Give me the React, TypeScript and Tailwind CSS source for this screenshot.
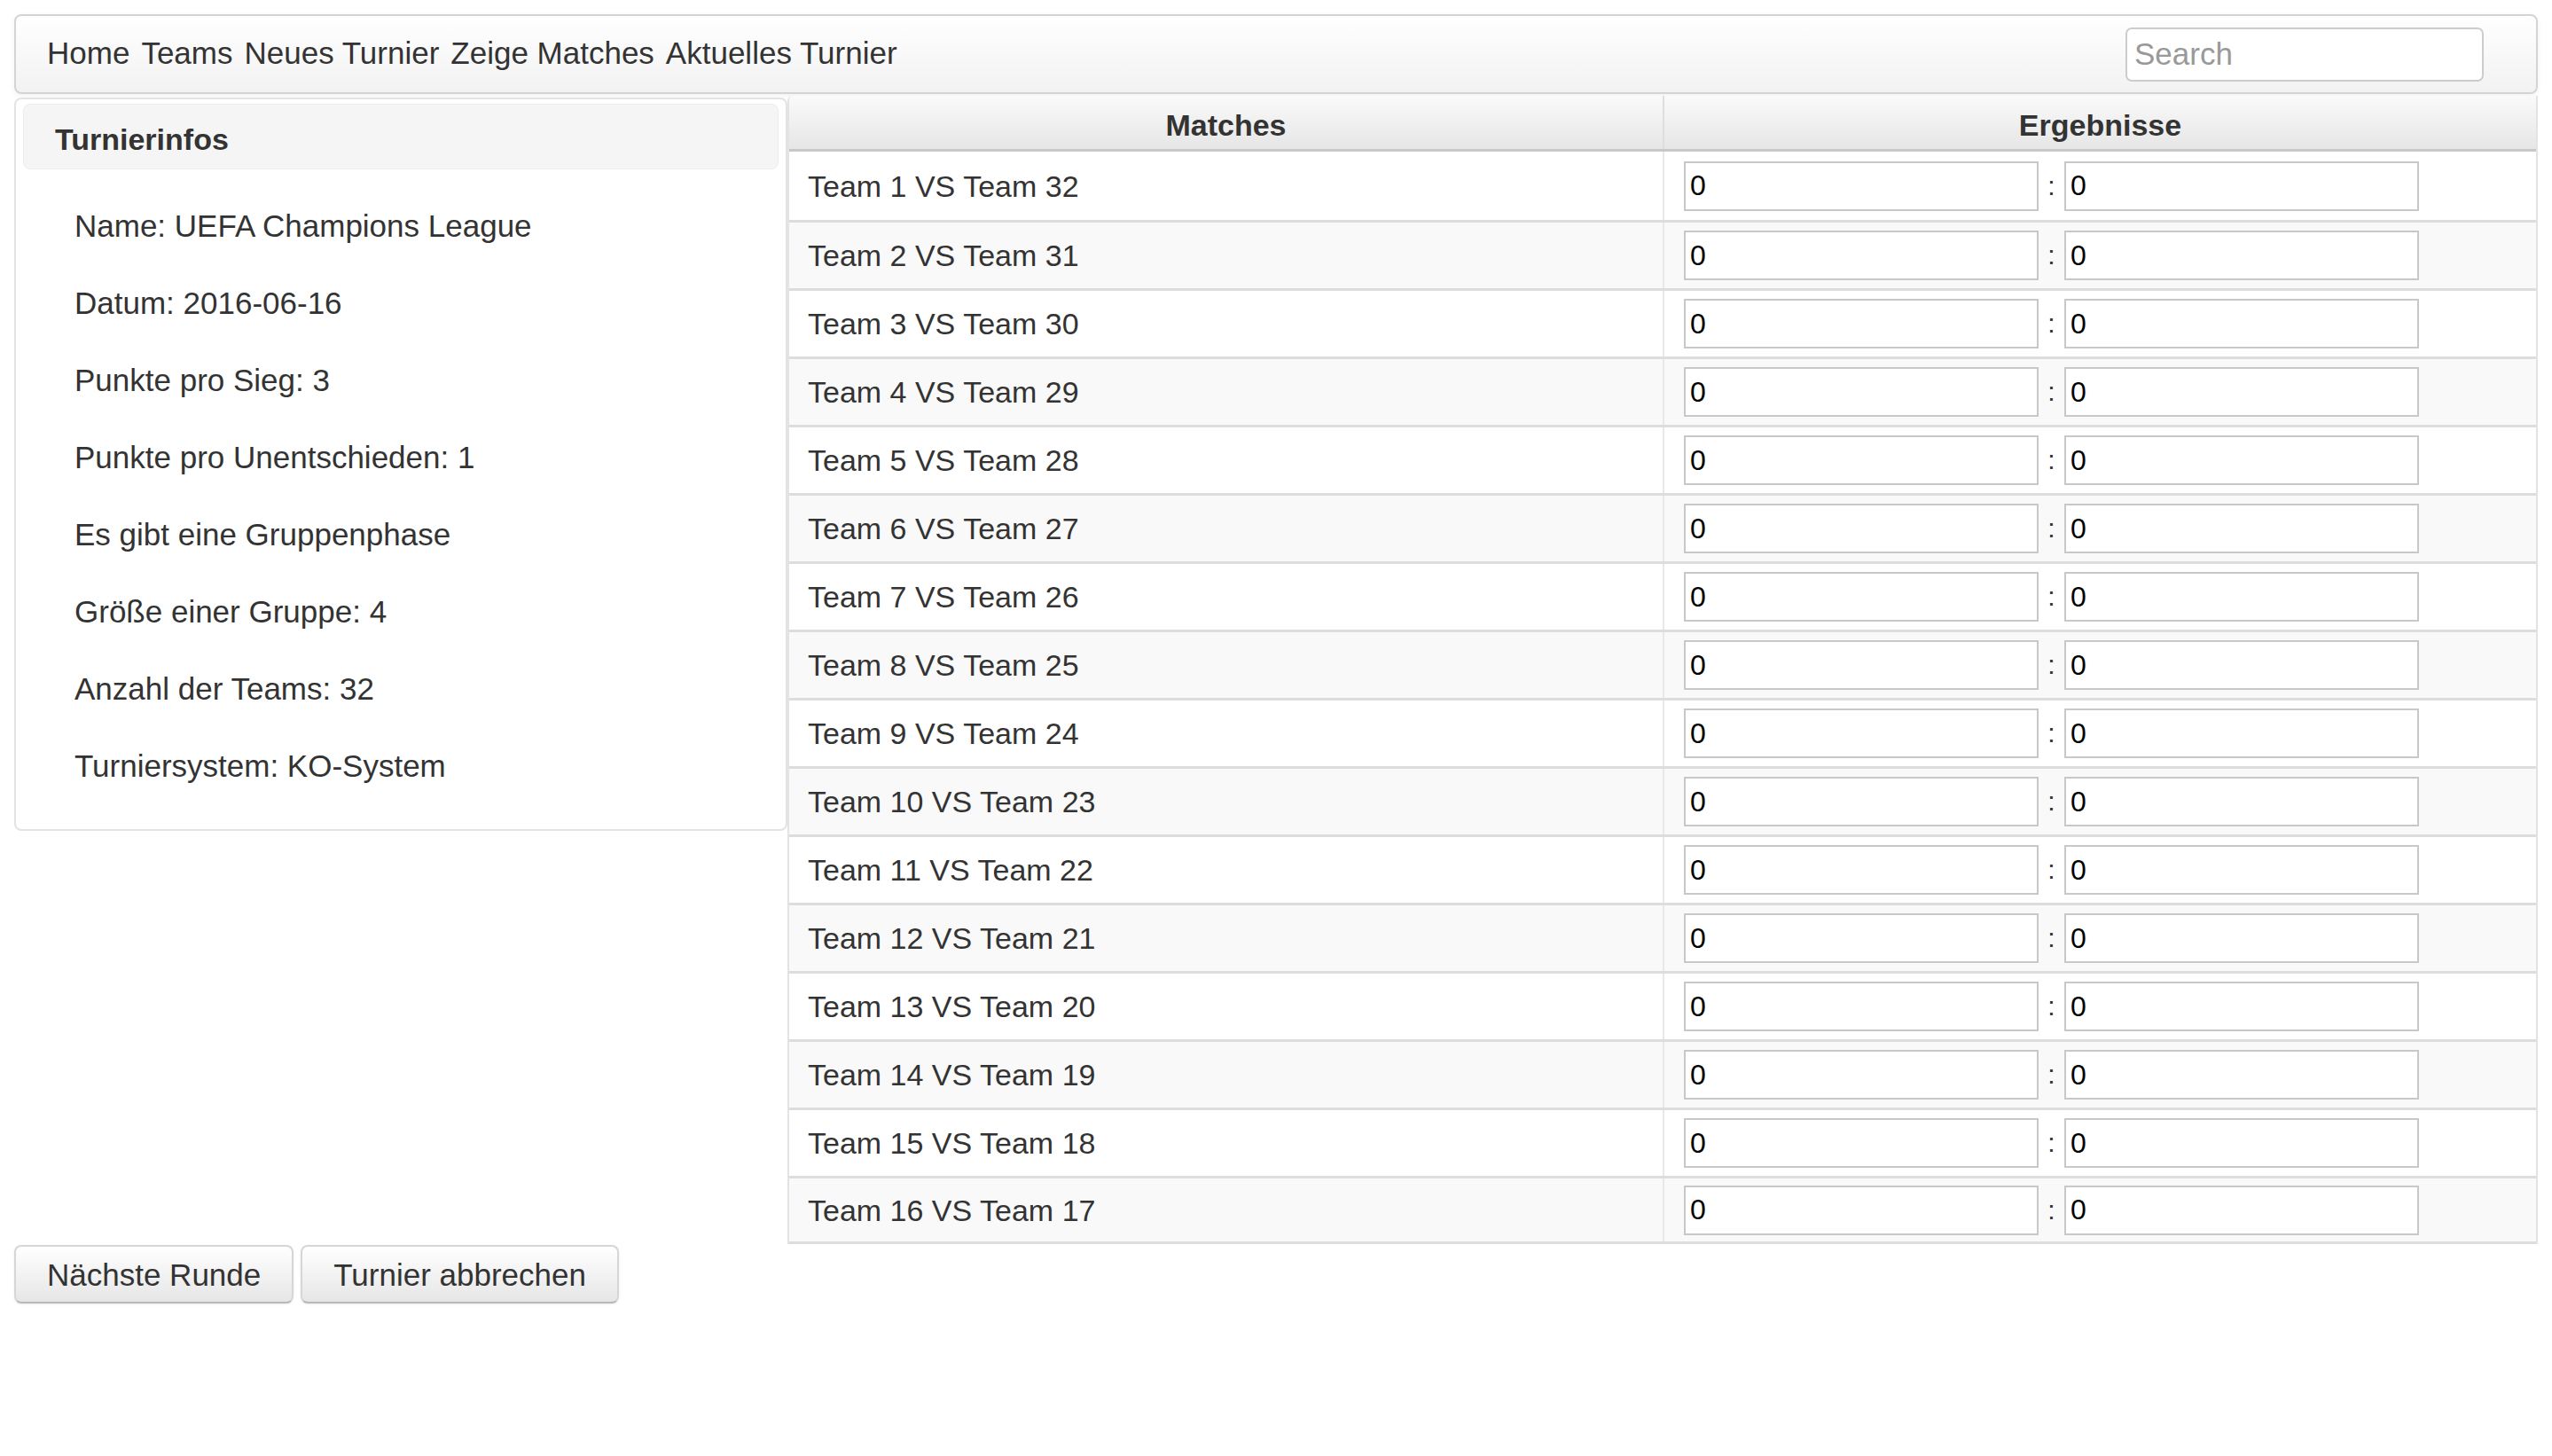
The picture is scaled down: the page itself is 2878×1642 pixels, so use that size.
import { useState } from 'react';

const infos = [
  'Name: UEFA Champions League',
  'Datum: 2016-06-16',
  'Punkte pro Sieg: 3',
  'Punkte pro Unentschieden: 1',
  'Es gibt eine Gruppenphase',
  'Größe einer Gruppe: 4',
  'Anzahl der Teams: 32',
  'Turniersystem: KO-System',
];

const navLinks = ['Home', 'Teams', 'Neues Turnier', 'Zeige Matches', 'Aktuelles Turnier'];

const matches = Array.from({ length: 16 }, (_, i) => ({
  id: i + 1,
  home: `Team ${i + 1}`,
  away: `Team ${32 - i}`,
}));

export default function App() {
  const [scores, setScores] = useState<Record<number, [string, string]>>(
    Object.fromEntries(matches.map((m) => [m.id, ['0', '0']])),
  );

  const setScore = (id: number, side: 0 | 1, v: string) =>
    setScores((s) => {
      const next: [string, string] = [...s[id]] as [string, string];
      next[side] = v;
      return { ...s, [id]: next };
    });

  return (
    <div className="min-h-screen bg-white px-4 pt-4 font-['Liberation_Sans',Arial,sans-serif] text-[35px] leading-none text-[#333]">
      {/* Navigation */}
      <nav className="flex h-[90px] items-center justify-between rounded-[8px] border-2 border-[#d4d4d4] bg-gradient-to-b from-white to-[#f2f2f2] pl-[35px] pr-[59px] shadow-[0_2px_6px_rgba(0,0,0,0.06)]">
        <div className="flex items-center gap-[13px] pb-[3px]">
          {navLinks.map((l) => (
            <a key={l} href="#" className="text-[#333]">
              {l}
            </a>
          ))}
        </div>
        <input
          placeholder="Search"
          className="h-[61px] w-[404px] rounded-[7px] border-2 border-[#cccccc] bg-white px-[8px] text-[35px] text-[#333] outline-none placeholder:text-[#999]"
        />
      </nav>

      <div className="mt-[2px] flex items-start">
        {/* Turnierinfos */}
        <div className="mt-[2px] w-[872px] shrink-0 rounded-[8px] border-2 border-[#e3e3e3] bg-white px-[8px] pb-[28px] pt-[5px]">
          <div className="flex h-[74px] items-center rounded-[8px] border border-[#ececec] bg-[#f5f5f5] pl-[35px] pt-[6px] text-[34px] font-bold">
            Turnierinfos
          </div>
          <div className="mt-[20px] pl-[58px]">
            {infos.map((t) => (
              <div key={t} className="flex h-[87px] items-center">
                {t}
              </div>
            ))}
          </div>
        </div>

        {/* Matches */}
        <div className="flex-1 overflow-hidden rounded-tl-[6px] border-x-2 border-[#e3e3e3] text-[34px]">
          <div className="grid h-[63px] grid-cols-2 border-b-[3px] border-[#c8c8c8] bg-gradient-to-b from-[#fafafa] to-[#e6e6e6] font-bold">
            <div className="flex items-center justify-center pt-[5px]">Matches</div>
            <div className="flex items-center justify-center border-l-2 border-[#dedede] pt-[5px]">Ergebnisse</div>
          </div>
          {matches.map((m, i) => (
            <div
              key={m.id}
              className={`grid h-[77px] grid-cols-2 ${i > 0 ? 'border-t-[3px] border-[#dddddd]' : ''} ${
                i % 2 === 1 ? 'bg-[#f9f9f9]' : 'bg-white'
              } ${i === matches.length - 1 ? 'border-b-[3px]' : ''}`}
            >
              <div className="flex items-center pl-[21px]">
                {m.home} VS {m.away}
              </div>
              <div className="flex items-center border-l-2 border-[#e8e8e8] pl-[22px]">
                <input
                  value={scores[m.id][0]}
                  onChange={(e) => setScore(m.id, 0, e.target.value)}
                  className="h-[56px] w-[400px] border-2 border-[#c8c8c8] bg-white px-[5px] text-[32px] text-black outline-none"
                />
                <span className="w-[29px] text-center text-[30px]">:</span>
                <input
                  value={scores[m.id][1]}
                  onChange={(e) => setScore(m.id, 1, e.target.value)}
                  className="h-[56px] w-[400px] border-2 border-[#c8c8c8] bg-white px-[5px] text-[32px] text-black outline-none"
                />
              </div>
            </div>
          ))}
        </div>
      </div>

      {/* Aktionen */}
      <div className="mt-[1px] flex gap-[8px]">
        {['Nächste Runde', 'Turnier abbrechen'].map((b) => (
          <button
            key={b}
            className="h-[66px] rounded-[8px] border-2 border-[#d6d6d6] border-b-[#b8b8b8] bg-gradient-to-b from-white to-[#e6e6e6] px-[35px] text-[35px] text-[#333] shadow-[0_1px_3px_rgba(0,0,0,0.08)]"
          >
            {b}
          </button>
        ))}
      </div>
    </div>
  );
}
